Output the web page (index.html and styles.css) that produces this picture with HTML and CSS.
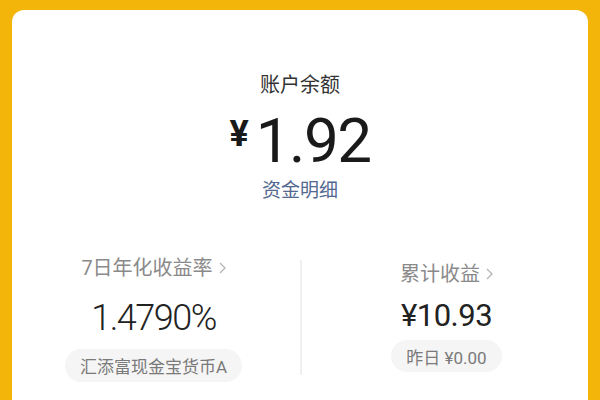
FILE: index.html
```html
<!DOCTYPE html>
<html lang="zh-CN">
<head>
    <meta charset="UTF-8">
    <meta name="viewport" content="width=device-width, initial-scale=1.0">
    <title>账户余额</title>
    <link rel="stylesheet" href="styles.css">
</head>
<body>
    <div class="card">
        <div class="balance-label">账户余额</div>
        <div class="balance">
            <span class="currency">¥</span>
            <span class="amount">1.92</span>
        </div>
        <a class="detail-link" href="#">资金明细</a>

        <div class="stats">
            <div class="stat stat-left">
                <div class="stat-title">
                    7日年化收益率
                    <svg class="chevron" width="7" height="12" viewBox="0 0 7 12"><polyline points="1,1 6,6 1,11" fill="none" stroke="#b5b5b5" stroke-width="1.3"/></svg>
                </div>
                <div class="stat-value rate">1.4790%</div>
                <div class="pill">汇添富现金宝货币A</div>
            </div>
            <div class="divider"></div>
            <div class="stat stat-right">
                <div class="stat-title">
                    累计收益
                    <svg class="chevron" width="7" height="12" viewBox="0 0 7 12"><polyline points="1,1 6,6 1,11" fill="none" stroke="#b5b5b5" stroke-width="1.3"/></svg>
                </div>
                <div class="stat-value total">¥10.93</div>
                <div class="pill">昨日 ¥0.00</div>
            </div>
        </div>
    </div>
</body>
</html>
```

FILE: styles.css
```css
/* Grundlayout */
html, body {
    height: 100%;
    overflow: hidden;
}
body {
    margin: 0;
    padding: 10px 12px 0;
    box-sizing: border-box;
    background: #f3b509;
    font-family: Roboto, "Noto Sans CJK SC", sans-serif;
    color: #222;
}
.card {
    background: #fff;
    border-radius: 12px 12px 0 0;
    height: 100%;
    padding-top: 61px;
    box-sizing: border-box;
    text-align: center;
}

/* Kontostand */
.balance-label {
    font-size: 20px;
    line-height: 28px;
    color: #333;
}
.balance {
    display: flex;
    justify-content: center;
    align-items: flex-start;
    margin-top: 11px;
    height: 62px;
}
.currency {
    font-size: 36px;
    font-weight: bold;
    line-height: 36px;
    margin-top: 6px;
    margin-right: 7px;
    color: #1a1a1a;
}
.amount {
    font-size: 62px;
    line-height: 62px;
    letter-spacing: -1.5px;
    color: #1a1a1a;
}
.detail-link {
    display: block;
    margin-top: 6px;
    font-size: 19px;
    line-height: 26px;
    color: #53688f;
    text-decoration: none;
}

/* Kennzahlen */
.stats {
    display: flex;
    margin-top: 51px;
}
.stat {
    flex: 1;
    display: flex;
    flex-direction: column;
    align-items: center;
}
.stat-left {
    padding-right: 5px;
}
.stat-right {
    padding-top: 6px;
    padding-left: 3px;
}
.divider {
    width: 2px;
    height: 115px;
    margin-top: 5px;
    background: #efefef;
}
.stat-title {
    display: flex;
    align-items: center;
    font-size: 20px;
    line-height: 26px;
    color: #8a8a8a;
}
.chevron {
    margin-left: 6px;
}
.stat-value {
    line-height: 40px;
    color: #222;
}
.rate {
    margin-top: 17px;
    font-size: 36px;
    font-weight: 300;
    letter-spacing: -1.5px;
}
.total {
    margin-top: 9px;
    font-size: 31px;
    letter-spacing: -0.5px;
}
.pill {
    display: inline-flex;
    align-items: center;
    height: 33px;
    padding: 0 15px;
    border-radius: 17px;
    background: #f5f5f5;
    font-size: 17px;
    color: #7a7a7a;
}
.stat-left .pill {
    margin-top: 11px;
}
.stat-right .pill {
    margin-top: 4px;
    height: 32px;
}
```
